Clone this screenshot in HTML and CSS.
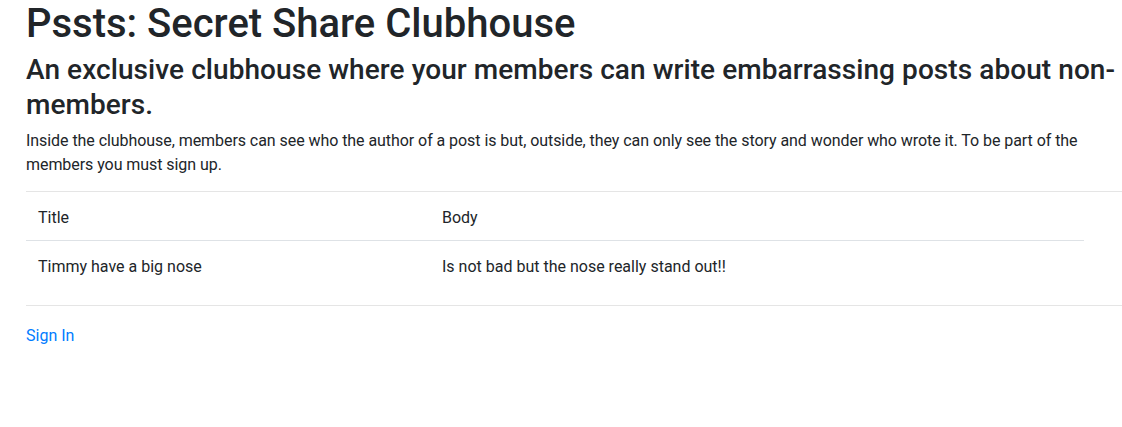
FILE: index.html
```html
<!DOCTYPE html>
<html lang="en">
<head>
<meta charset="utf-8">
<title>Pssts: Secret Share Clubhouse</title>
<link rel="stylesheet" href="styles.css">
</head>
<body>
<main class="page">
  <h1 class="title">Pssts: Secret Share Clubhouse</h1>
  <h3 class="subtitle">An exclusive clubhouse where your members can write embarrassing posts about non-members.</h3>
  <p class="lead">Inside the clubhouse, members can see who the author of a post is but, outside, they can only see the story and wonder who wrote it. To be part of the members you must sign up.</p>
  <hr class="rule">
  <table class="posts">
    <thead>
      <tr><td class="col-title">Title</td><td>Body</td></tr>
    </thead>
    <tbody>
      <tr><td>Timmy have a big nose</td><td>Is not bad but the nose really stand out!!</td></tr>
    </tbody>
  </table>
  <hr class="rule">
  <a class="signin" href="#">Sign In</a>
</main>
</body>
</html>
```

FILE: styles.css
```css
html, body {
  margin: 0;
  padding: 0;
  background: #fff;
}
body {
  font-family: Roboto, "Liberation Sans", sans-serif;
  font-size: 16px;
  line-height: 1.5;
  color: #212529;
}
.page {
  padding-left: 26px;
}
.title {
  font-size: 40px;
  font-weight: 500;
  line-height: 1.2;
  margin: 0 0 5px;
}
.subtitle {
  font-size: 28px;
  font-weight: 500;
  line-height: 34.5px;
  letter-spacing: 0.07px;
  margin: 0 0 7px;
}
.lead {
  letter-spacing: -0.06px;
  margin: 0 0 14px;
}
.rule {
  margin: 0;
  border: 0;
  border-top: 1px solid rgba(0, 0, 0, 0.1);
}
.posts {
  width: 1058px;
  border-collapse: collapse;
  margin: 0 0 16px;
}
.posts td {
  padding: 14px 12px 10px;
  vertical-align: top;
}
.posts tbody td {
  border-top: 1px solid #dee2e6;
}
.col-title {
  width: 380px;
}
.signin {
  display: inline-block;
  margin-top: 18px;
  color: #007bff;
  text-decoration: none;
}
```
